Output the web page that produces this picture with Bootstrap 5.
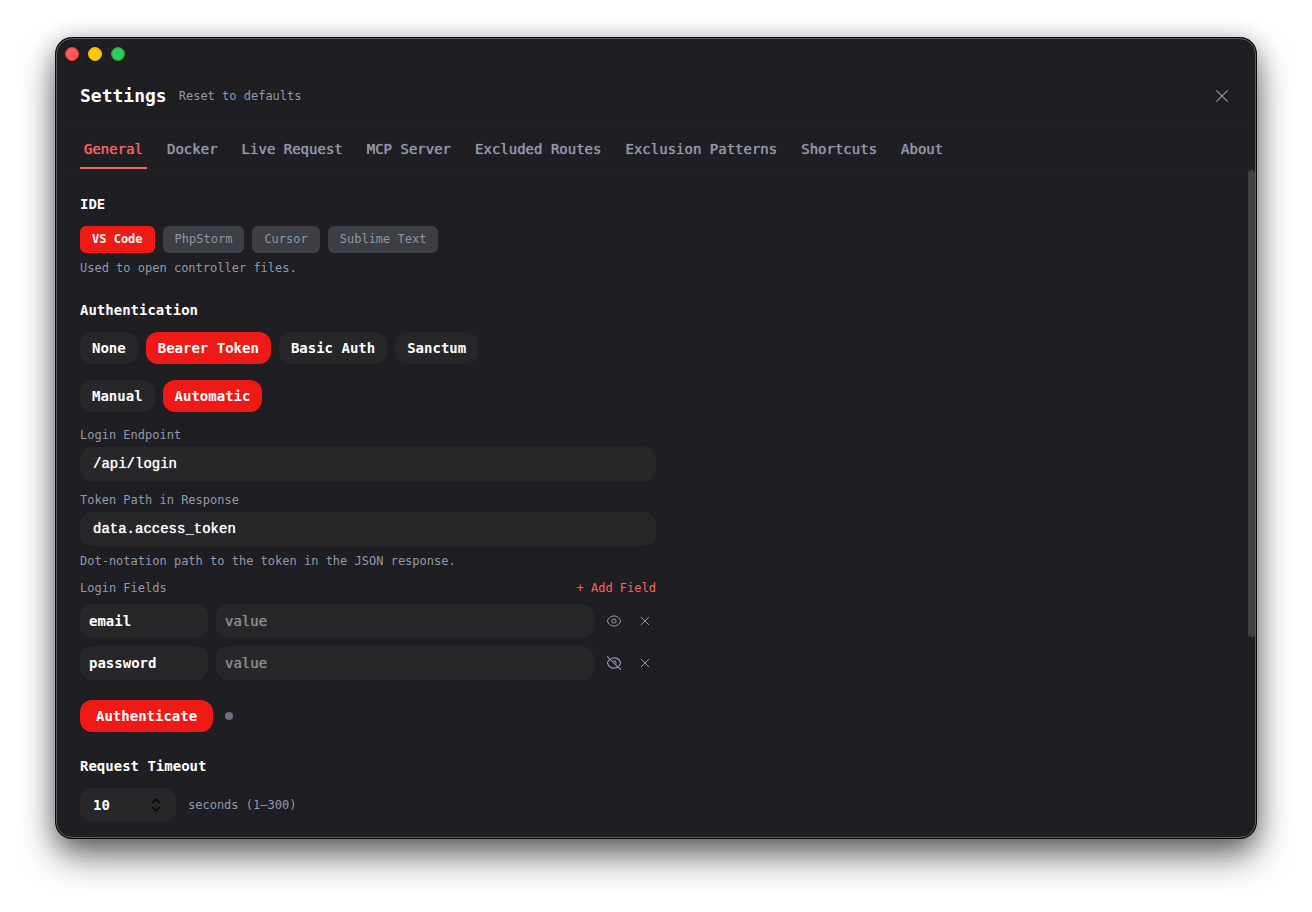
<!DOCTYPE html>
<html lang="en" data-bs-theme="dark">
<head>
<meta charset="utf-8">
<meta name="viewport" content="width=device-width, initial-scale=1">
<title>Settings</title>
<link href="https://cdn.jsdelivr.net/npm/bootstrap@5.3.0/dist/css/bootstrap.min.css" rel="stylesheet">
<style>
  :root { --panel:#1f1e23; --field:#272729; --accent:#ef1a15; --coral:#f9635f; --muted:#9299a8; }
  body { background:#fff; color:#fff; font-family:"DejaVu Sans Mono","Liberation Mono",monospace; font-size:14px; line-height:20px; padding:38px 56px 74px; }
  .app-window { background:var(--panel); border:1px solid #5c5c62; border-radius:16px; overflow:hidden;
    box-shadow:0 0 0 1px #0a0a0a, 0 18px 36px rgba(0,0,0,.55), 0 4px 24px rgba(0,0,0,.28); }
  .titlebar { height:30px; padding:0 8px; gap:9px; }
  .light { width:14px; height:14px; border-radius:50%; border:1px solid; padding:0; }
  .light-red { background:#ff5a5c; border-color:#f0373b; }
  .light-yellow { background:#fcc800; border-color:#f0bd00; }
  .light-green { background:#34c759; border-color:#16ac32; }
  .settings-head { height:58px; padding:0 23px 4px; border-bottom:1px solid #232327; }
  .settings-head h1 { font-size:18px; line-height:24px; }
  .plain-btn { background:none; border:0; padding:0; color:var(--muted); font-size:12px; line-height:16px; }
  .add-btn { color:var(--coral); }
  .close-btn { margin-right:2px; }
  .tabs { padding:0 23px; border-bottom:1px solid #232327; gap:16px; }
  .tabs .nav-link { padding:12px 4px 8px; color:var(--muted); border-bottom:2px solid transparent; text-shadow:0 0 1px currentColor; }
  .tabs .nav-link.active { color:var(--coral); border-color:var(--coral); }
  .panel-body { padding:24px 23px 15px; }
  .scroll-rail { width:7px; }
  .scroll-thumb { height:70%; background:#414146; border-radius:4px; }
  h2 { font-size:14px; line-height:20px; font-weight:700; margin:0 0 12px; }
  .settings-form { max-width:576px; }
  .hint, .field-label { color:var(--muted); font-size:12px; line-height:16px; margin:0; display:block; }
  .field-label { margin-bottom:4px; }
  .hint-gap { margin-top:7px; }
  .group-gap { margin-top:11px; }
  .chip { background:#3e3f44; color:#8f96a5; border:0; border-radius:6px; font-size:12px; line-height:18px; padding:4px 12px 5px; }
  .pill { background:var(--field); color:#fff; border:0; border-radius:12px; font-size:14px; line-height:20px; font-weight:700; padding:6px 12px; }
  .chip.on, .pill.on { background:var(--accent); color:#fff; }
  .chip.on { font-weight:700; }
  .field { background:var(--field)!important; color:#fff!important; border:0; border-radius:12px; font-size:14px; line-height:24px; padding:5px 13px; height:34px; text-shadow:0 0 1px currentColor; }
  .field-path { font-family:"Liberation Mono",monospace; }
  .field::placeholder { color:#8b8b8d; opacity:1; }
  .field-sm { padding:5px 9px; }
  .field-key { width:128px; font-weight:700; text-shadow:none; }
  .icon-btn { background:none; border:0; padding:0; color:var(--muted); width:16px; height:16px; display:flex; }
  .field-row { padding-right:3px; }
  .row-actions { gap:15px; }
  .status-dot { width:8px; height:8px; border-radius:50%; background:#6b7183; }
  .timeout-box { width:96px; }
  .timeout-box input { appearance:textfield; font-weight:700; text-shadow:none; }
  .timeout-box input::-webkit-inner-spin-button { appearance:none; }
  .stepper { position:absolute; right:12px; top:8px; pointer-events:none; }
</style>
</head>
<body class="d-flex flex-column min-vh-100">
<main class="app-window d-flex flex-column flex-grow-1">
  <div class="titlebar d-flex align-items-center">
    <button class="light light-red" aria-label="Close window"></button>
    <button class="light light-yellow" aria-label="Minimize window"></button>
    <button class="light light-green" aria-label="Zoom window"></button>
  </div>
  <header class="settings-head d-flex align-items-center">
    <h1 class="fw-bold mb-0">Settings</h1>
    <button class="plain-btn ms-2 ps-1">Reset to defaults</button>
    <button class="plain-btn close-btn ms-auto d-flex" aria-label="Close settings">
      <svg width="16" height="16" viewBox="0 0 16 16" fill="none" stroke="currentColor" stroke-width="1.2" stroke-linecap="round"><path d="M2.800 2.800l10.400 10.400M13.200 2.800l-10.400 10.400"/></svg>
    </button>
  </header>
  <nav class="tabs nav">
    <a class="nav-link active" href="#general" aria-current="page">General</a>
    <a class="nav-link" href="#docker">Docker</a>
    <a class="nav-link" href="#live">Live Request</a>
    <a class="nav-link" href="#mcp">MCP Server</a>
    <a class="nav-link" href="#routes">Excluded Routes</a>
    <a class="nav-link" href="#patterns">Exclusion Patterns</a>
    <a class="nav-link" href="#shortcuts">Shortcuts</a>
    <a class="nav-link" href="#about">About</a>
  </nav>
  <div class="d-flex flex-grow-1">
    <div class="panel-body flex-grow-1">
      <form class="settings-form" id="general">
        <section class="mb-4">
          <h2>IDE</h2>
          <div class="d-flex gap-2">
            <button type="button" class="chip on">VS Code</button>
            <button type="button" class="chip">PhpStorm</button>
            <button type="button" class="chip">Cursor</button>
            <button type="button" class="chip">Sublime Text</button>
          </div>
          <p class="hint hint-gap">Used to open controller files.</p>
        </section>
        <section class="mb-4">
          <h2>Authentication</h2>
          <div class="d-flex gap-2 mb-3">
            <button type="button" class="pill">None</button>
            <button type="button" class="pill on">Bearer Token</button>
            <button type="button" class="pill">Basic Auth</button>
            <button type="button" class="pill">Sanctum</button>
          </div>
          <div class="d-flex gap-2">
            <button type="button" class="pill">Manual</button>
            <button type="button" class="pill on">Automatic</button>
          </div>
          <div class="group-gap pt-1">
            <label class="field-label" for="endpoint">Login Endpoint</label>
            <input class="form-control field field-path" id="endpoint" value="/api/login">
          </div>
          <div class="group-gap">
            <label class="field-label" for="tokenpath">Token Path in Response</label>
            <input class="form-control field field-path" id="tokenpath" value="data.access_token">
            <p class="hint hint-gap">Dot-notation path to the token in the JSON response.</p>
          </div>
          <div class="group-gap d-flex justify-content-between mb-2">
            <span class="hint">Login Fields</span>
            <button type="button" class="plain-btn add-btn">+ Add Field</button>
          </div>
          <div class="field-row d-flex align-items-center gap-2 mb-2">
            <input class="form-control field field-sm field-key flex-shrink-0" aria-label="Field name" value="email">
            <input class="form-control field field-sm" aria-label="email value" placeholder="value">
            <div class="row-actions d-flex ms-1">
              <button type="button" class="icon-btn" aria-label="Show value">
                <svg width="16" height="16" viewBox="0 0 16 16" fill="none" stroke="currentColor"><path d="M1.400 8C2.300 5 4.900 2.900 8 2.900S13.700 5 14.600 8C13.700 11 11.100 13.100 8 13.100S2.300 11 1.400 8Z"/><circle cx="8" cy="8" r="2.100"/></svg>
              </button>
              <button type="button" class="icon-btn" aria-label="Remove email">
                <svg width="16" height="16" viewBox="0 0 16 16" fill="none" stroke="currentColor" stroke-linecap="round"><path d="M4.200 4.200l7.600 7.600M11.800 4.200l-7.600 7.600"/></svg>
              </button>
            </div>
          </div>
          <div class="field-row d-flex align-items-center gap-2">
            <input class="form-control field field-sm field-key flex-shrink-0" aria-label="Field name" value="password">
            <input class="form-control field field-sm" type="password" aria-label="password value" placeholder="value">
            <div class="row-actions d-flex ms-1">
              <button type="button" class="icon-btn" aria-label="Hide value">
                <svg width="16" height="16" viewBox="0 0 16 16" fill="none" stroke="currentColor" stroke-linecap="round"><path d="M3.400 4.600C2.500 5.500 1.800 6.700 1.400 8c.9 3 3.500 5.100 6.600 5.100 1.500 0 2.900-.5 4.100-1.300M5.600 3.400C6.400 3.100 7.200 2.900 8 2.900c3.100 0 5.700 2.100 6.600 5.100-.3 1-.8 1.900-1.500 2.700M8 5.900A2.100 2.100 0 0 1 10.100 8M1.500 1.700l13 12.600" stroke-width="1.100"/></svg>
              </button>
              <button type="button" class="icon-btn" aria-label="Remove password">
                <svg width="16" height="16" viewBox="0 0 16 16" fill="none" stroke="currentColor" stroke-linecap="round"><path d="M4.200 4.200l7.600 7.600M11.800 4.200l-7.600 7.600"/></svg>
              </button>
            </div>
          </div>
          <div class="d-flex align-items-center pt-3 mt-1">
            <button type="submit" class="pill on px-3 me-1">Authenticate</button>
            <span class="status-dot ms-2"></span>
          </div>
        </section>
        <section>
          <h2><label for="timeout">Request Timeout</label></h2>
          <div class="d-flex align-items-center">
            <div class="timeout-box position-relative">
              <input class="form-control field" type="number" id="timeout" min="1" max="300" value="10">
              <svg class="stepper" width="16" height="18" viewBox="0 0 16 18" fill="none" stroke="#09090b" stroke-width="1.500" stroke-linecap="round" stroke-linejoin="round"><path d="M4.500 6.500L8 3l3.500 3.500M4.500 11.500L8 15l3.500-3.500"/></svg>
            </div>
            <span class="hint ms-2 ps-1">seconds (1–300)</span>
          </div>
        </section>
      </form>
    </div>
    <div class="scroll-rail"><div class="scroll-thumb"></div></div>
  </div>
</main>
<script src="https://cdn.jsdelivr.net/npm/bootstrap@5.3.0/dist/js/bootstrap.bundle.min.js"></script>
</body>
</html>
